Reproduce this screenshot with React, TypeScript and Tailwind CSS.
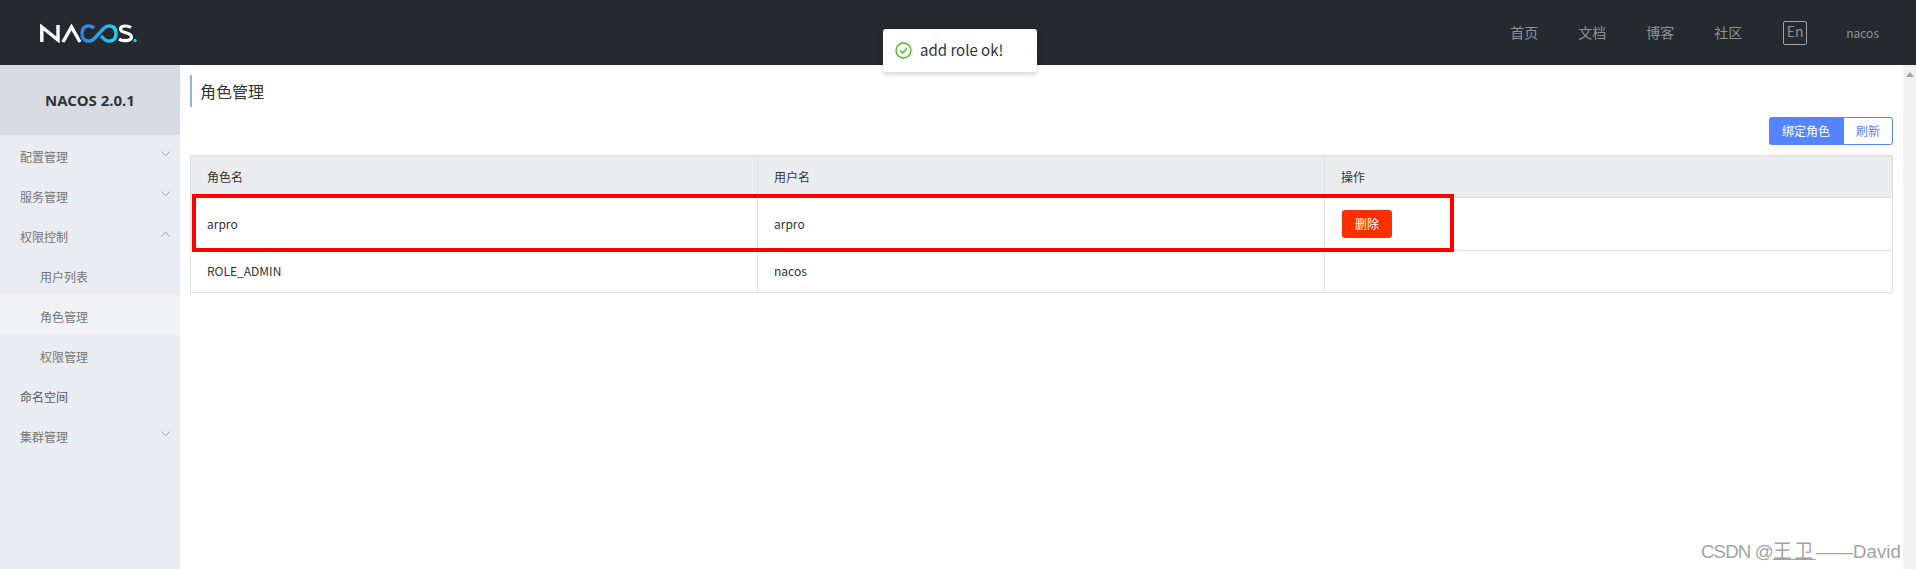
const FONT = "font-['Noto_Sans_CJK_SC','Noto_Sans',sans-serif]";

function Chevron({ up }: { up?: boolean }) {
  return (
    <svg width="9" height="6" viewBox="0 0 9 6" fill="none" stroke="#9aa0a8" strokeWidth="1">
      <path d={up ? "M0.5 5.5 L4.5 1 L8.5 5.5" : "M0.5 0.5 L4.5 5 L8.5 0.5"} />
    </svg>
  );
}

function Logo() {
  return (
    <svg width="98" height="20" viewBox="0 0 98 20" fill="none">
      <defs>
        <linearGradient id="inf" x1="0" x2="1" y1="0" y2="0">
          <stop offset="0" stopColor="#2f80ed" />
          <stop offset="1" stopColor="#1fd1f0" />
        </linearGradient>
      </defs>
      <path d="M1.8 19 V4 L18 17 V2" stroke="#fff" strokeWidth="3.4" />
      <path d="M23 19 L31.5 4 L40 19" stroke="#fff" strokeWidth="3.4" />
      <path
        d="M54 5 C50 1.5 42 2 42 10.5 C42 19 50 19.5 54 16 L64 5 C68 1.5 76 2 76 10.5 C76 19 68 19.5 64 16 L61 13"
        stroke="url(#inf)"
        strokeWidth="3.4"
      />
      <path d="M91 4.5 C88 2.5 80.5 2 80.5 6 C80.5 11 91.5 8.5 91.5 14 C91.5 18.5 82 18.5 79 16" stroke="#fff" strokeWidth="3.2" />
      <circle cx="95" cy="17.5" r="1.7" fill="#1fc8ee" />
    </svg>
  );
}

function NavItem({ label, sub, active, chevron }: { label: string; sub?: boolean; active?: boolean; chevron?: "up" | "down" }) {
  return (
    <div className={`flex h-10 items-center justify-between pr-[10px] pt-1 text-[12px] ${sub ? "pl-10" : "pl-5"} ${active ? "bg-[#f0f2f6]" : ""} ${label === "命名空间" ? "text-[#555]" : "text-[#777]"}`}>
      <span>{label}</span>
      {chevron && <span className="mb-[6px] flex"><Chevron up={chevron === "up"} /></span>}
    </div>
  );
}

function Row({ cells, header, action, last }: { cells: string[]; header?: boolean; action?: boolean; last?: boolean }) {
  return (
    <div className={`grid grid-cols-[567px_567px_1fr] ${last ? "h-[41px]" : "border-b border-[#dcdee3]"} ${header ? "h-[42px] bg-[#ebecf0]" : action ? "h-[53px]" : ""}`}>
      {cells.map((c, i) => (
        <div key={i} className={`flex items-center pl-4 text-[12px] text-[#333] ${last ? "pb-[2px]" : ""} ${i < 2 ? "border-r border-[#dcdee3]" : ""}`}>
          {c}
          {i === 2 && action && (
            <button className="ml-px flex h-7 w-[50px] items-center justify-center rounded-[3px] bg-[#ff3000] text-[12px] text-white">删除</button>
          )}
        </div>
      ))}
    </div>
  );
}

export default function App() {
  return (
    <div className={`relative flex h-[569px] w-[1916px] flex-col overflow-hidden bg-white ${FONT}`}>
      <header className="flex h-[65px] shrink-0 items-center justify-between bg-[#252a2f] pl-10 pr-[37px]">
        <Logo />
        <nav className="flex items-center text-[14px] text-[#8f9296]">
          <span className="mr-[40px]">首页</span>
          <span className="mr-[40px]">文档</span>
          <span className="mr-[40px]">博客</span>
          <span className="mr-[41px]">社区</span>
          <span className="mr-[39px] flex h-6 w-6 items-center justify-center rounded-[2px] border border-[#a0a3a6] pb-[3px] text-[14px]">En</span>
          <span className="text-[12px]">nacos</span>
        </nav>
      </header>

      <div className="flex min-h-0 flex-1">
        <aside className="w-[180px] shrink-0 bg-[#e9ecf1]">
          <div className="flex h-[70px] items-center justify-center bg-[#d7dce4] text-[15px] font-bold text-[#333] font-['Noto_Sans',sans-serif]">
            NACOS 2.0.1
          </div>
          <NavItem label="配置管理" chevron="down" />
          <NavItem label="服务管理" chevron="down" />
          <NavItem label="权限控制" chevron="up" />
          <NavItem label="用户列表" sub />
          <NavItem label="角色管理" sub active />
          <NavItem label="权限管理" sub />
          <NavItem label="命名空间" />
          <NavItem label="集群管理" chevron="down" />
        </aside>

        <main className="flex min-w-0 flex-1 flex-col pl-[10px] pr-[10px] pt-[10px]">
          <h1 className="flex h-8 items-center border-l-2 border-[#88b7e0] pl-2 text-[16px] font-normal text-[#333]">角色管理</h1>
          <div className="mt-[10px] flex justify-end">
            <button className="flex h-7 w-[74px] items-center justify-center rounded-l-[3px] bg-[#5584ff] text-[12px] text-white">绑定角色</button>
            <button className="flex h-7 w-[50px] items-center justify-center rounded-r-[3px] border border-[#5584ff] bg-white text-[12px] text-[#5584ff]">刷新</button>
          </div>
          <div className="mt-[10px] border border-[#dcdee3]">
            <Row header cells={["角色名", "用户名", "操作"]} />
            <Row action cells={["arpro", "arpro", ""]} />
            <Row last cells={["ROLE_ADMIN", "nacos", ""]} />
          </div>
        </main>

        <div className="flex w-[13px] shrink-0 justify-center bg-[#f1f1f1] pt-[7px]">
          <svg width="8" height="5" viewBox="0 0 8 5"><path d="M4 0 L8 5 H0 Z" fill="#a3a3a3" /></svg>
        </div>
      </div>

      <div className="absolute left-[883px] top-[29px] flex h-[43px] w-[154px] items-center gap-[8px] rounded-[3px] bg-white pl-3 text-[15px] text-[#333] shadow-[0_2px_5px_rgba(0,0,0,0.2)]">
        <svg width="17" height="17" viewBox="0 0 17 17" fill="none" stroke="#46bc15" strokeWidth="1.3">
          <circle cx="8.5" cy="8.5" r="7.5" />
          <path d="M5 8.5 L7.7 11 L12 6" />
        </svg>
        <span>add role ok!</span>
      </div>

      <div className="absolute left-[192px] top-[194px] h-[58px] w-[1262px] border-4 border-[#ff0000]" />

      <div className="absolute left-[1701px] top-[541px] whitespace-nowrap text-[18.7px] leading-[22px] text-[#a3a3a3] font-['Liberation_Sans','Noto_Sans_CJK_SC',sans-serif]">
        <span className="tracking-[-0.9px]">CSDN @</span><span className="text-[19px] tracking-[2.5px] underline">王卫</span>——David
      </div>
    </div>
  );
}
